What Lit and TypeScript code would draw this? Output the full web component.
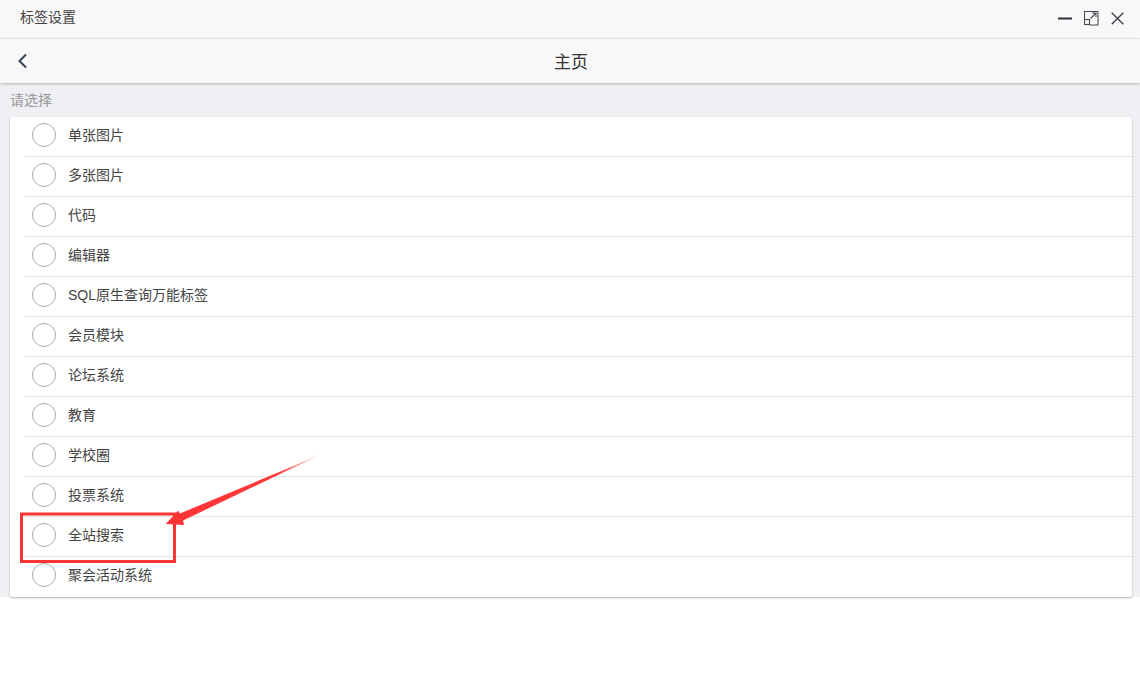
import { LitElement, html, css, svg } from "lit";
import { customElement } from "lit/decorators.js";

const items = ["单张图片","多张图片","代码","编辑器","SQL原生查询万能标签","会员模块","论坛系统","教育","学校圈","投票系统","全站搜索","聚会活动系统"];

@customElement("app-root")
export class AppRoot extends LitElement {
  static styles = css`
    :host { display: block; position: relative; width: 1140px; height: 673px; overflow: hidden; background: #fff;
      font-family: "Liberation Sans", "Noto Sans CJK SC", sans-serif; color: #444; font-size: 14px; }
    .title { height: 39px; box-sizing: border-box; background: #f8f8f8; border-bottom: 1px solid #eee; display: flex; align-items: center; padding: 0 16px 5px 20px; }
    .title span { flex: 1; font-size: 14px; line-height: 20px; color: #444; }
    .wins { display: flex; align-items: center; gap: 12px; margin-top: 3px; }
    .wins svg { display: block; }
    .nav { height: 44px; box-sizing: border-box; background: #f8f8f8; box-shadow: 0 1px 3px rgba(0,0,0,.25); display: flex; align-items: center; justify-content: center; position: relative; z-index: 1; padding: 3px 0 0 2px; }
    .nav .back { position: absolute; left: 17px; top: 14px; display: block; }
    .nav span { font-size: 17px; color: #333; line-height: 24px; }
    .body { background: #efeff4; height: 514px; box-sizing: border-box; padding: 0 8px 0 10px; display: flex; flex-direction: column; }
    .hint { height: 34px; box-sizing: border-box; padding-top: 8px; font-size: 14px; line-height: 18px; color: #999; }
    .card { background: #fff; border-radius: 2px; box-shadow: 0 1px 2px rgba(0,0,0,.3); padding-left: 15px; }
    .row { height: 40px; box-sizing: border-box; border-bottom: 1px solid #e3e3e3; display: flex; align-items: center; padding: 0 0 3px 7px; gap: 12px; }
    .row:last-child { border-bottom: 0; padding-bottom: 4px; }
    .radio { width: 24px; height: 24px; box-sizing: border-box; border: 1.4px solid #aaa; border-radius: 50%; flex: none; }
    .label { font-size: 14px; line-height: 18px; color: #444; }
    .overlay { position: absolute; left: 0; top: 0; pointer-events: none; }
  `;

  render() {
    return html`
      <div class="title">
        <span>标签设置</span>
        <div class="wins">
          <svg width="14" height="15" viewBox="0 0 14 15"><path d="M0 7.500h14" stroke="#2f2f3c" stroke-width="2"/></svg>
          <svg width="15" height="15" viewBox="0 0 15 15" fill="none" stroke="#4a4a55" stroke-width="1.100"><path d="M.5 9V.5h13.500v13.500H5.500"/><rect x=".5" y="8.500" width="5" height="5"/><path d="M6.500 7.500l5.500-5.500M8 2h4v4"/></svg>
          <svg width="13" height="13" viewBox="0 0 13 13" fill="none" stroke="#3a3a45" stroke-width="1.300"><path d="M.7.700l11.600 11.600M12.300.700L.7 12.300"/></svg>
        </div>
      </div>
      <div class="nav">
        <svg class="back" width="11" height="16" viewBox="0 0 11 16" fill="none" stroke="#34405a" stroke-width="2"><path d="M9 1.500L2.500 8 9 14.500"/></svg>
        <span>主页</span>
      </div>
      <div class="body">
        <div class="hint">请选择</div>
        <div class="card">
          ${items.map((t) => html`<div class="row"><div class="radio"></div><div class="label">${t}</div></div>`)}
        </div>
      </div>
      <svg class="overlay" width="1140" height="673">
        ${svg`
          <defs><linearGradient id="g" gradientUnits="userSpaceOnUse" x1="322" y1="454" x2="170" y2="522"><stop offset="0" stop-color="#ff3a3a" stop-opacity=".15"/><stop offset=".3" stop-color="#ff3a3a"/><stop offset="1" stop-color="#ff3333"/></linearGradient></defs>
          <rect x="21.500" y="514" width="153" height="47.500" fill="none" stroke="#f83535" stroke-width="3"/>
          <path d="M322 454L180 513.500 178 510.700 165.700 524 184 525 183 520.500Z" fill="url(#g)"/>
        `}
      </svg>
    `;
  }
}
